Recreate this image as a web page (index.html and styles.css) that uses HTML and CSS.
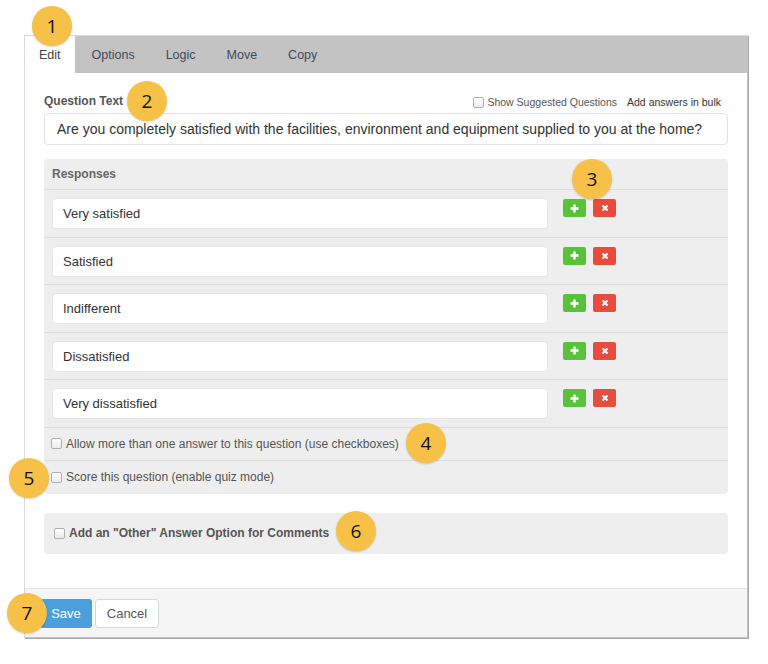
FILE: index.html
```html
<!DOCTYPE html>
<html lang="en">
<head>
  <meta charset="UTF-8">
  <title>Edit Question</title>
  <link rel="stylesheet" href="styles.css">
</head>
<body>
  <div class="page">
    <div class="dialog">
      <!-- Tabs -->
      <div class="tabs">
        <span class="tab active">Edit</span>
        <span class="tab">Options</span>
        <span class="tab">Logic</span>
        <span class="tab">Move</span>
        <span class="tab">Copy</span>
      </div>

      <div class="dialog-body">
        <!-- Question -->
        <div class="q-head">
          <span class="q-label">Question Text</span>
          <div class="q-tools">
            <span class="check"></span>
            <span class="q-suggest">Show Suggested Questions</span>
            <span class="q-bulk">Add answers in bulk</span>
          </div>
        </div>
        <div class="field q-field">Are you completely satisfied with the facilities, environment and equipment supplied to you at the home?</div>

        <!-- Responses -->
        <div class="panel">
          <div class="panel-head">Responses</div>
          <div class="resp-row">
            <div class="field resp-field">Very satisfied</div>
            <span class="mini-btn add"><svg width="9" height="9" viewBox="0 0 9 9"><path d="M4.5 0.5v8M0.5 4.5h8" stroke="#fff" stroke-width="2.4"/></svg></span>
            <span class="mini-btn del"><svg width="8" height="8" viewBox="0 0 8 8"><path d="M1.5 1.5l5 5M6.5 1.5l-5 5" stroke="#fff" stroke-width="2"/></svg></span>
          </div>
          <div class="resp-row">
            <div class="field resp-field">Satisfied</div>
            <span class="mini-btn add"><svg width="9" height="9" viewBox="0 0 9 9"><path d="M4.5 0.5v8M0.5 4.5h8" stroke="#fff" stroke-width="2.4"/></svg></span>
            <span class="mini-btn del"><svg width="8" height="8" viewBox="0 0 8 8"><path d="M1.5 1.5l5 5M6.5 1.5l-5 5" stroke="#fff" stroke-width="2"/></svg></span>
          </div>
          <div class="resp-row">
            <div class="field resp-field">Indifferent</div>
            <span class="mini-btn add"><svg width="9" height="9" viewBox="0 0 9 9"><path d="M4.5 0.5v8M0.5 4.5h8" stroke="#fff" stroke-width="2.4"/></svg></span>
            <span class="mini-btn del"><svg width="8" height="8" viewBox="0 0 8 8"><path d="M1.5 1.5l5 5M6.5 1.5l-5 5" stroke="#fff" stroke-width="2"/></svg></span>
          </div>
          <div class="resp-row">
            <div class="field resp-field">Dissatisfied</div>
            <span class="mini-btn add"><svg width="9" height="9" viewBox="0 0 9 9"><path d="M4.5 0.5v8M0.5 4.5h8" stroke="#fff" stroke-width="2.4"/></svg></span>
            <span class="mini-btn del"><svg width="8" height="8" viewBox="0 0 8 8"><path d="M1.5 1.5l5 5M6.5 1.5l-5 5" stroke="#fff" stroke-width="2"/></svg></span>
          </div>
          <div class="resp-row">
            <div class="field resp-field">Very dissatisfied</div>
            <span class="mini-btn add"><svg width="9" height="9" viewBox="0 0 9 9"><path d="M4.5 0.5v8M0.5 4.5h8" stroke="#fff" stroke-width="2.4"/></svg></span>
            <span class="mini-btn del"><svg width="8" height="8" viewBox="0 0 8 8"><path d="M1.5 1.5l5 5M6.5 1.5l-5 5" stroke="#fff" stroke-width="2"/></svg></span>
          </div>
          <div class="check-row">
            <span class="check"></span>
            <span>Allow more than one answer to this question (use checkboxes)</span>
          </div>
          <div class="check-row last">
            <span class="check"></span>
            <span>Score this question (enable quiz mode)</span>
          </div>
        </div>

        <!-- Other option -->
        <div class="panel other">
          <span class="check"></span>
          <span>Add an "Other" Answer Option for Comments</span>
        </div>
      </div>

      <!-- Footer -->
      <div class="footer">
        <span class="btn btn-save">Save</span>
        <span class="btn btn-cancel">Cancel</span>
      </div>
    </div>

    <!-- Callout numbers -->
    <span class="badge b1">1</span>
    <span class="badge b2">2</span>
    <span class="badge b3">3</span>
    <span class="badge b4">4</span>
    <span class="badge b5">5</span>
    <span class="badge b6">6</span>
    <span class="badge b7">7</span>
  </div>
</body>
</html>
```

FILE: styles.css
```css
* {
  margin: 0;
  padding: 0;
  box-sizing: border-box;
}

body {
  background-color: #ffffff;
  font-family: "Liberation Sans", Arial, Helvetica, sans-serif;
  color: #555;
}

.page {
  position: relative;
  width: 768px;
  height: 664px;
  padding-top: 35px;
}

/* Dialog */
.dialog {
  width: 724px;
  margin-left: 24px;
  background-color: #fff;
  border: 1px solid #dadada;
  border-right-color: #c4c4c4;
  border-bottom-color: #c4c4c4;
  box-shadow: 1px 1px 0 #a9a9a9;
}

/* Tabs */
.tabs {
  display: flex;
  height: 37px;
  background-color: #c3c3c3;
}

.tab {
  display: flex;
  align-items: center;
  padding: 0 14px;
  margin-right: 3px;
  font-size: 12.5px;
  color: #3d4b5c;
}

.tab.active {
  background-color: #fff;
  color: #444;
}

/* Body */
.dialog-body {
  padding: 20px 19px 34px;
}

.q-head {
  display: flex;
  align-items: center;
  justify-content: space-between;
  height: 16px;
  margin-bottom: 4px;
}

.q-label {
  font-size: 12px;
  font-weight: bold;
  color: #555;
}

.q-tools {
  display: flex;
  align-items: center;
  font-size: 10.5px;
  padding-right: 7px;
  padding-top: 2px;
}

.q-suggest {
  margin-left: 3px;
  color: #555;
}

.q-bulk {
  margin-left: 10px;
  color: #333;
}

.field {
  display: flex;
  align-items: center;
  background-color: #fff;
  border: 1px solid #e2e2e2;
  border-radius: 4px;
  color: #333;
}

.q-field {
  height: 32px;
  padding-left: 12px;
  font-size: 14px;
}

/* Panels */
.panel {
  background-color: #eeeeee;
  border-radius: 4px;
  margin-top: 14px;
}

.panel-head {
  height: 31px;
  padding-left: 8px;
  display: flex;
  align-items: center;
  font-size: 12px;
  font-weight: bold;
  color: #666;
  border-bottom: 1px solid #dcdcdc;
}

.resp-row {
  display: flex;
  align-items: flex-start;
  height: 47.5px;
  padding: 8px 8px 0;
  border-bottom: 1px solid #dcdcdc;
}

.resp-field {
  width: 496px;
  height: 31px;
  padding-left: 10px;
  font-size: 13px;
  border-color: #e6e6e6;
}

.mini-btn {
  display: flex;
  align-items: center;
  justify-content: center;
  width: 23px;
  height: 18px;
  margin-top: 1px;
  border-radius: 2px;
}

.mini-btn.add {
  background-color: #5ac23a;
  margin-left: 15px;
}

.mini-btn.del {
  background-color: #e84c3d;
  margin-left: 7px;
}

.check-row {
  display: flex;
  align-items: center;
  gap: 4px;
  height: 33px;
  padding-left: 7px;
  font-size: 12px;
  color: #555;
  border-bottom: 1px solid #dcdcdc;
}

.check-row.last {
  border-bottom: none;
}

.check {
  display: inline-block;
  width: 11px;
  height: 11px;
  border: 1px solid #b0b0b0;
  border-radius: 2px;
  background: linear-gradient(#ffffff, #ececec);
}

.panel.other {
  display: flex;
  align-items: center;
  gap: 4px;
  height: 41px;
  margin-top: 19px;
  padding-left: 10px;
  font-size: 12px;
  font-weight: bold;
  color: #555;
}

/* Footer */
.footer {
  display: flex;
  align-items: flex-start;
  height: 49px;
  padding: 10px 0 0 15px;
  background-color: #f5f5f6;
  border-top: 1px solid #e4e4e4;
}

.btn {
  display: flex;
  align-items: center;
  justify-content: center;
  height: 29px;
  border-radius: 3px;
  font-size: 13px;
}

.btn-save {
  width: 52px;
  background-color: #4a9fdc;
  color: #fff;
}

.btn-cancel {
  width: 64px;
  margin-left: 3px;
  background-color: #fff;
  border: 1px solid #d8d8d8;
  color: #555;
}

/* Callout badges */
.badge {
  position: absolute;
  width: 40px;
  height: 40px;
  border-radius: 50%;
  background-color: #f6c146;
  box-shadow: 0 1px 2px rgba(0, 0, 0, 0.18);
  display: flex;
  align-items: center;
  justify-content: center;
  font-family: "Open Sans", "Liberation Sans", sans-serif;
  font-size: 19px;
  color: #111;
}

.b1 { left: 32px; top: 6px; }
.b2 { left: 127px; top: 81px; }
.b3 { left: 572px; top: 159px; }
.b4 { left: 406px; top: 423px; }
.b5 { left: 9px; top: 458px; }
.b6 { left: 336px; top: 511px; }
.b7 { left: 7px; top: 593px; }
```
